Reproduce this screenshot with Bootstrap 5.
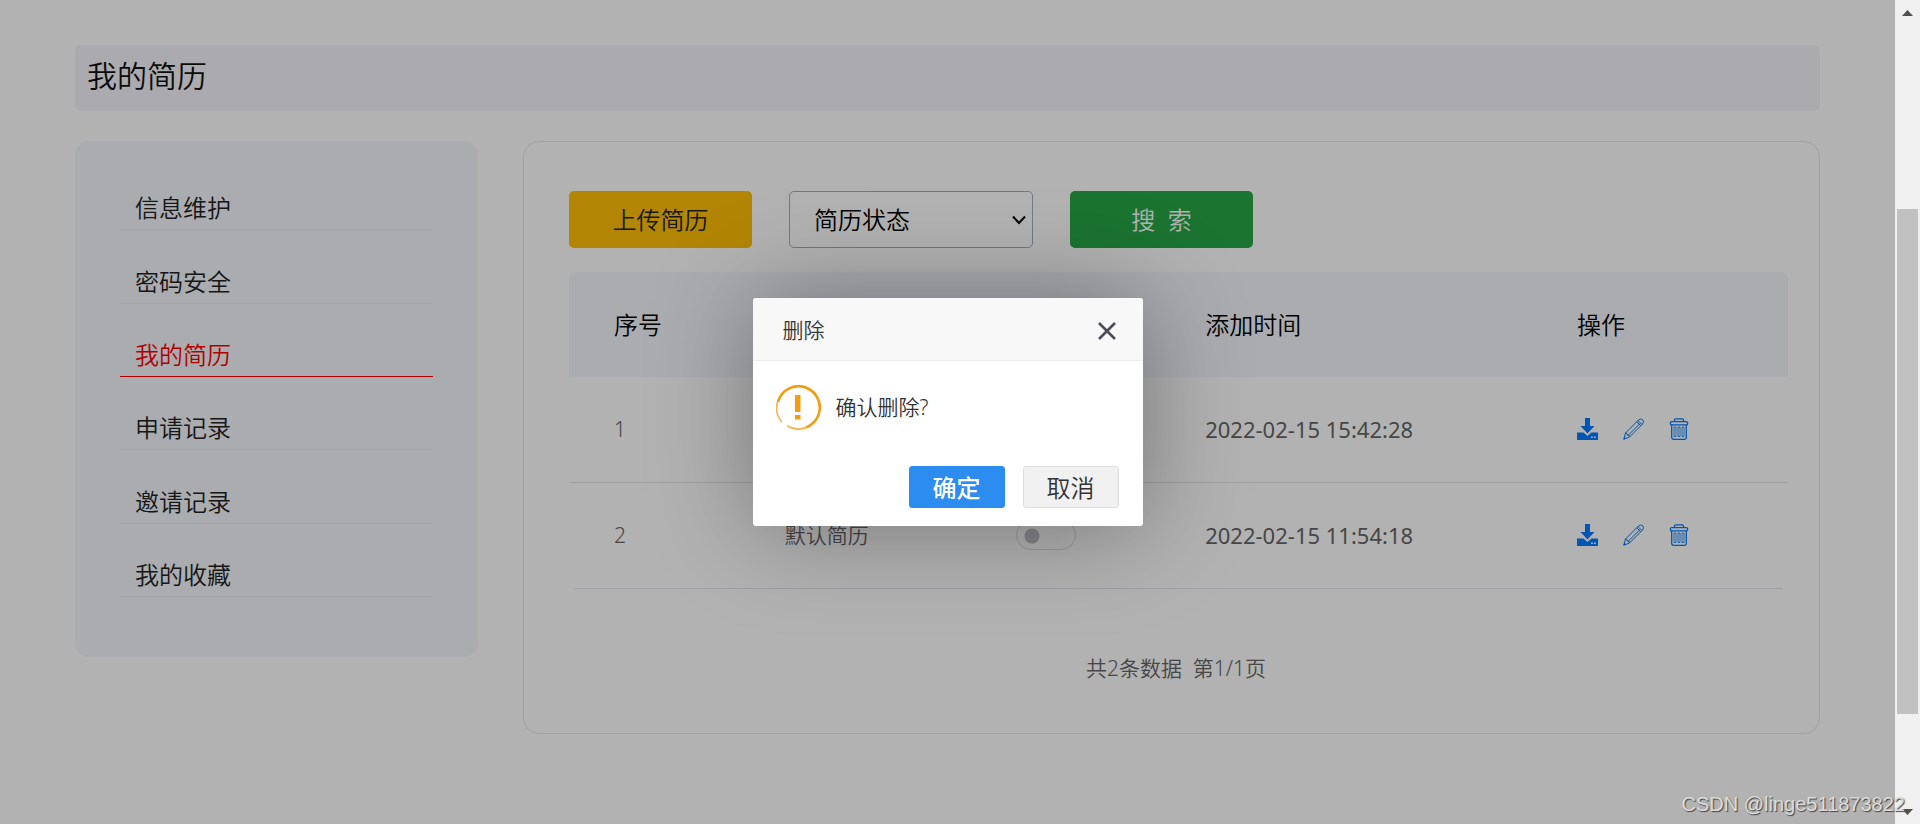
<!DOCTYPE html>
<html lang="zh-CN">
<head>
<meta charset="utf-8">
<meta name="viewport" content="width=device-width, initial-scale=1">
<title>我的简历</title>
<link href="https://cdn.jsdelivr.net/npm/bootstrap@5.3.0/dist/css/bootstrap.min.css" rel="stylesheet">
<style>
  body { font-family: "Noto Sans", "Noto Sans CJK SC", sans-serif; font-size: 21px; color: #666; background: #fff; }
  .window { min-height: 100vh; }
  .page-area { padding: 45px 75px; }
  .page-title { background: #f5f5fb; color: #111; font-size: 30px; font-weight: 350; line-height: 62px; padding: 0 12px 4px; border-radius: 6px; margin-bottom: 30px; }
  .columns { display: grid; grid-template-columns: 403fr 1297fr; gap: 45px; align-items: start; }

  .side-menu { background: #f4f6fb; border-radius: 14px; padding: 16px 45px 60px; font-weight: 350; }
  .side-menu ul { height: 440px; }
  .side-menu a { color: #222; font-size: 24px; line-height: 36px; padding: 0 15px 3px; border-bottom: 1px solid #ebedf2; text-decoration: none; }
  .side-menu a.current { color: #f00; border-bottom-color: #f00; }

  .panel { border: 1px solid #e9e9ee; border-radius: 16px; padding: 49px 31px 49px 45px; font-weight: 350; }
  .tools { gap: 37px; margin-bottom: 24px; }
  .tools .btn { width: 183px; height: 57px; font-size: 24px; font-weight: 350; padding: 0; border: 0; border-radius: 5px; }
  .btn-upload, .btn-upload:hover { background: #ffc107; color: #212529; }
  .btn-search, .btn-search:hover { background: #28a745; color: #fff; }
  .tools .form-select { width: 244px; height: 57px; font-size: 24px; font-weight: 350; line-height: 36px; padding: 0 36px 0 24px; color: #000; border-color: #a0aebc; border-radius: 5px;
    background-image: url("data:image/svg+xml,%3csvg xmlns='http://www.w3.org/2000/svg' viewBox='0 0 14 10'%3e%3cpath fill='none' stroke='%23000' stroke-width='2' d='M1 1.5l6 6.5 6-6.5'/%3e%3c/svg%3e");
    background-size: 14px 10px; background-position: right 6px center; }

  .resume-table { table-layout: fixed; width: 100%; }
  .resume-table th { background: #f4f6fb; color: #000; font-size: 24px; font-weight: 350; height: 105px; }
  .resume-table th, .resume-table td { padding: 0 0 0 45px; }
  .resume-table th:first-child { border-top-left-radius: 8px; }
  .resume-table th:last-child { border-top-right-radius: 8px; }
  .resume-table td { height: 106px; }
  .resume-table tbody tr:first-child td { height: 105px; border-bottom: 1px solid #e6e6e9; }
  .resume-table .stamp { font-size: 22px; font-weight: 400; }
  .table-end { border: 0; border-top: 1px solid #e4e4ea; opacity: 1; margin: 0 5px; }
  .ops { gap: 25px; }
  .ops a { color: #007bff; line-height: 0; }
  .ops svg { width: 21px; height: 22px; }

  .switch { appearance: none; width: 60px; height: 30px; border: 1px solid #dcdcdc; border-radius: 15px; margin: 0; display: block;
    background: radial-gradient(circle 8px at 15px 15px, #bfc1c5 7px, transparent 8px); }
  .summary { line-height: 32px; padding-top: 63px; margin-right: 5px; }

  .shade { background: rgba(0,0,0,.3); inset: 0; }
  .dialog { width: 390px; background: #fff; border-radius: 3px; box-shadow: 1px 1px 100px rgba(0,0,0,.35); color: #333; font-weight: 350; }
  .dialog-head { height: 63px; background: #f8f8f8; border-bottom: 1px solid #eee; padding: 3px 26px 0 30px; border-radius: 3px 3px 0 0; }
  .dialog-head h2 { font-size: 21px; font-weight: 350; }
  .dialog-close { border: 0; background: none; padding: 0; line-height: 0; }
  .dialog-body { padding: 24px 23px 36px; gap: 15px; }
  .dialog-foot { gap: 18px; padding: 0 24px 18px; }
  .dialog-foot .btn { width: 96px; height: 42px; font-size: 24px; line-height: 36px; padding: 2px 0 0; border-radius: 3px; }
  .dialog-foot .btn-confirm, .btn-confirm:hover { background: #2d8cf0; border-color: #2d8cf0; color: #fff; font-weight: 500; }
  .dialog-foot .btn-dismiss, .btn-dismiss:hover { background: #f1f1f1; border-color: #dedede; color: #333; font-weight: 350; }

  .scroll-rail { width: 25px; background: #f0f0f0; }
  .rail-cap { height: 25px; }
  .rail-thumb { background: #c1c1c1; margin: 0 2px; flex: 505 1 0; }
  .rail-before { flex: 184 1 0; }
  .rail-after { flex: 85 1 0; }
  .watermark { right: 15px; bottom: 5px; font: 20px/30px "Liberation Sans", sans-serif; color: #dcdcdc; text-shadow: 1px 1px 1px #444; }
</style>
</head>
<body>
<svg class="d-none" aria-hidden="true">
  <symbol id="i-download" viewBox="0 0 21 22">
    <path fill="currentColor" d="M8 0h5v8h4.500l-7 7.500L3.500 8H8zM0 14.500h6.500l4 3.500 4-3.500H21V22H0zM14 18.500v1.500h1.800v-1.500zm3 0v1.500h1.800v-1.500z" fill-rule="evenodd"/>
  </symbol>
  <symbol id="i-pencil" viewBox="0 0 21 22">
    <g fill="none" stroke="currentColor" stroke-width="1">
      <path d="M.8 21.200L2.500 15 15.500 2Q18 0 19.700 1.800 21.500 3.600 19.500 6L6.500 19z"/>
      <path d="M2.500 15l1.500.5.500 1.800 1.700.3.300 1.400M5.500 17L17 5.500M13.700 3.800l4 4M15 2.600l4 4"/>
    </g>
    <path fill="currentColor" d="M.5 21.500l.8-3 2.200 2.200z"/>
  </symbol>
  <symbol id="i-trash" viewBox="0 0 21 22">
    <g fill="none" stroke="currentColor" stroke-width="1.300">
      <path d="M5.500 3.500V2q0-1.200 1.200-1.200h6.600q1.200 0 1.200 1.200v1.500"/>
      <rect x="1.400" y="3.600" width="17.200" height="3.200" rx="1.200"/>
      <path d="M2.700 7v12.500q0 1.800 1.800 1.800h11q1.800 0 1.800-1.800V7"/>
    </g>
    <path fill="none" stroke="currentColor" stroke-width=".8" d="M5 9h2v9.500H5zM9 9h2v9.500H9zM13 9h2v9.500h-2z"/>
  </symbol>
</svg>

<div class="window d-flex position-relative">
  <div class="flex-grow-1 position-relative">
    <div class="page-area">
      <h1 class="page-title">我的简历</h1>
      <div class="columns">
        <nav class="side-menu">
          <ul class="list-unstyled d-flex flex-column m-0">
            <li class="d-flex flex-fill flex-column justify-content-end"><a href="#">信息维护</a></li>
            <li class="d-flex flex-fill flex-column justify-content-end"><a href="#">密码安全</a></li>
            <li class="d-flex flex-fill flex-column justify-content-end"><a href="#" class="current" aria-current="page">我的简历</a></li>
            <li class="d-flex flex-fill flex-column justify-content-end"><a href="#">申请记录</a></li>
            <li class="d-flex flex-fill flex-column justify-content-end"><a href="#">邀请记录</a></li>
            <li class="d-flex flex-fill flex-column justify-content-end"><a href="#">我的收藏</a></li>
          </ul>
        </nav>

        <main class="panel">
          <div class="tools d-flex">
            <button type="button" class="btn btn-upload">上传简历</button>
            <select class="form-select" aria-label="简历状态"><option>简历状态</option></select>
            <button type="button" class="btn btn-search">搜&nbsp; 索</button>
          </div>
          <table class="resume-table">
            <colgroup>
              <col style="width:14%"><col style="width:19%"><col style="width:15.500%"><col style="width:30.500%"><col style="width:21%">
            </colgroup>
            <thead>
              <tr><th>序号</th><th></th><th></th><th>添加时间</th><th>操作</th></tr>
            </thead>
            <tbody>
              <tr>
                <td>1</td><td></td><td></td>
                <td class="stamp">2022-02-15 15:42:28</td>
                <td><div class="ops d-flex">
                  <a href="#" aria-label="下载"><svg><use href="#i-download"/></svg></a>
                  <a href="#" aria-label="编辑"><svg><use href="#i-pencil"/></svg></a>
                  <a href="#" aria-label="删除"><svg><use href="#i-trash"/></svg></a>
                </div></td>
              </tr>
              <tr>
                <td>2</td><td>默认简历</td>
                <td><input type="checkbox" class="switch" role="switch" aria-label="启用"></td>
                <td class="stamp">2022-02-15 11:54:18</td>
                <td><div class="ops d-flex">
                  <a href="#" aria-label="下载"><svg><use href="#i-download"/></svg></a>
                  <a href="#" aria-label="编辑"><svg><use href="#i-pencil"/></svg></a>
                  <a href="#" aria-label="删除"><svg><use href="#i-trash"/></svg></a>
                </div></td>
              </tr>
            </tbody>
          </table>
          <hr class="table-end">
          <div class="summary text-center">共2条数据&nbsp; 第1/1页</div>
        </main>
      </div>
    </div>

    <div class="shade position-absolute d-flex align-items-center justify-content-center">
      <div class="dialog" role="dialog" aria-modal="true" aria-labelledby="dlg-title">
        <div class="dialog-head d-flex align-items-center justify-content-between">
          <h2 id="dlg-title" class="m-0">删除</h2>
          <button type="button" class="dialog-close" aria-label="关闭">
            <svg width="20" height="20" viewBox="0 0 20 20"><path d="M2 2l16 16M18 2L2 18" stroke="#4c4b58" stroke-width="2.600" fill="none"/></svg>
          </button>
        </div>
        <div class="dialog-body d-flex align-items-center">
          <svg width="45" height="45" viewBox="0 0 45 45" aria-hidden="true">
            <g fill="none" stroke="#f39c12">
              <path stroke-width="1.600" stroke-opacity=".75" d="M6 37.200A21.500 21.500 0 0 1 3 13M11 40.800A21.500 21.500 0 0 0 34 40.800"/>
              <path stroke-width="2.600" d="M2 17A21.200 21.200 0 0 1 32 3.500A21.200 21.200 0 0 1 30 42.400"/>
            </g>
            <path fill="#f39c12" d="M19 10h5.500v17H19zM19 30h5.500v4.500H19z"/>
          </svg>
          <span>确认删除?</span>
        </div>
        <div class="dialog-foot d-flex justify-content-end">
          <button type="button" class="btn btn-confirm">确定</button>
          <button type="button" class="btn btn-dismiss">取消</button>
        </div>
      </div>
    </div>
  </div>

  <div class="scroll-rail d-flex flex-column flex-shrink-0" aria-hidden="true">
    <div class="rail-cap d-flex align-items-center justify-content-center"><svg width="11" height="6" viewBox="0 0 11 6"><path d="M0 6L5.500 0 11 6z" fill="#505050"/></svg></div>
    <div class="rail-before"></div>
    <div class="rail-thumb"></div>
    <div class="rail-after"></div>
    <div class="rail-cap d-flex align-items-center justify-content-center"><svg width="11" height="6" viewBox="0 0 11 6"><path d="M0 0h11L5.500 6z" fill="#505050"/></svg></div>
  </div>
  <div class="watermark position-absolute">CSDN @linge511873822</div>
</div>
<script src="https://cdn.jsdelivr.net/npm/bootstrap@5.3.0/dist/js/bootstrap.bundle.min.js"></script>
</body>
</html>
